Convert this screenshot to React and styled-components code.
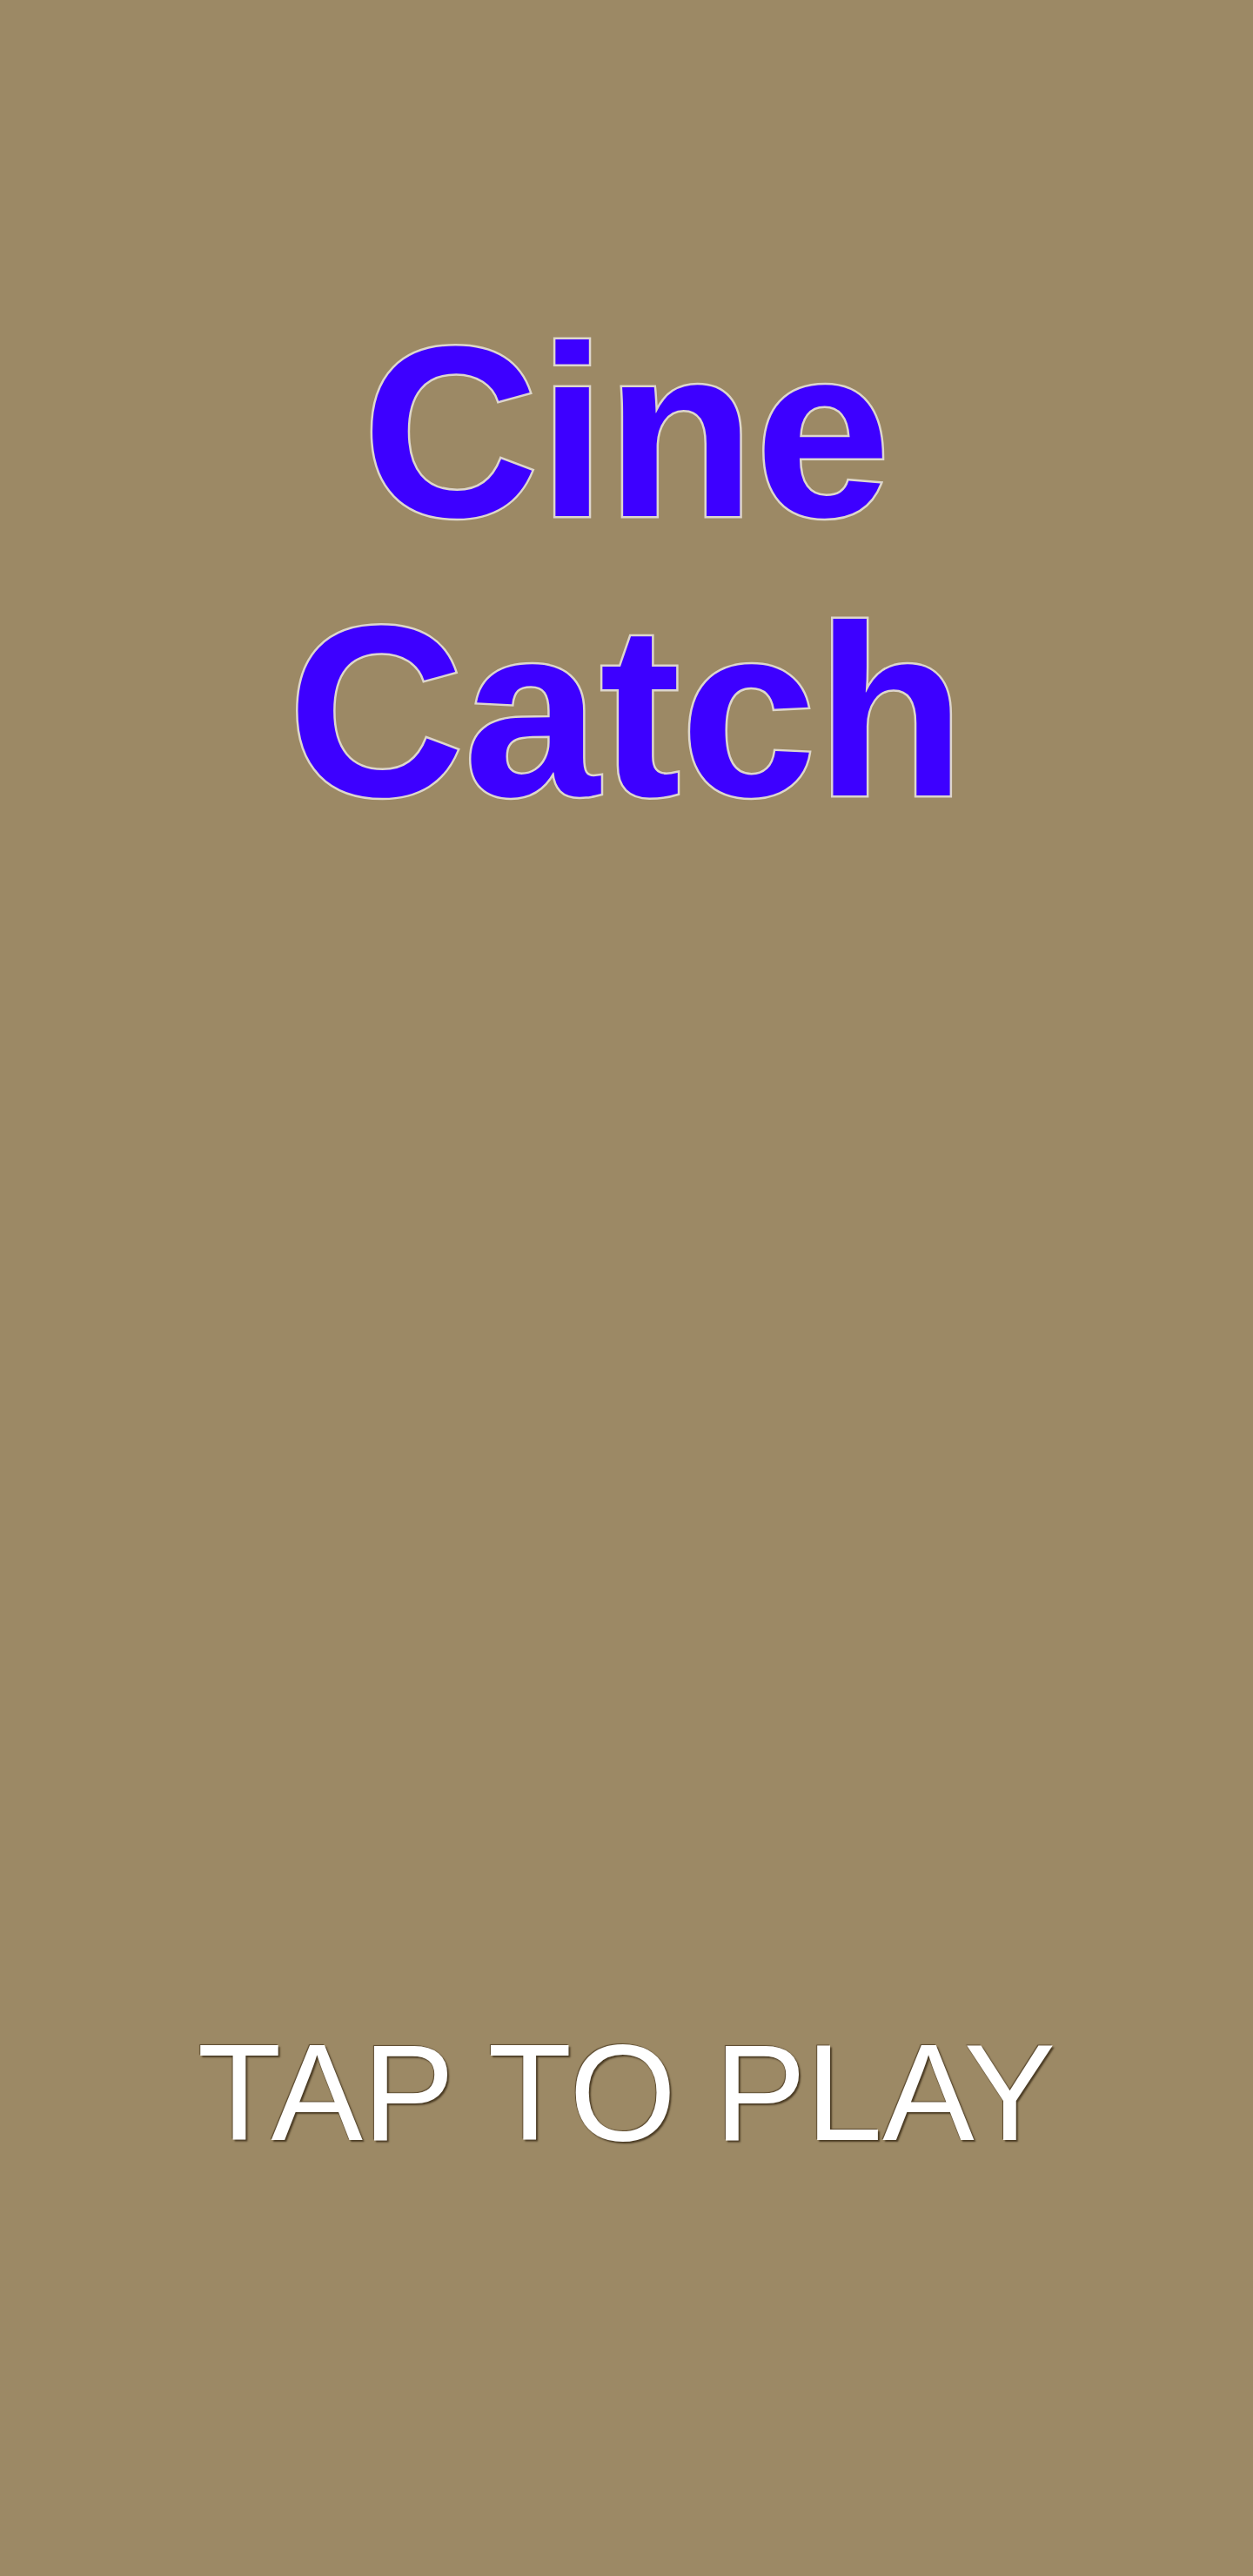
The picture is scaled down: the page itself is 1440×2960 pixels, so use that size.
import styled, { createGlobalStyle } from "styled-components"

const GlobalStyle = createGlobalStyle`
  html, body {
    margin: 0;
    padding: 0;
    background: #9c8965;
  }
  * {
    box-sizing: border-box;
  }
`

const Screen = styled.div`
  width: 100%;
  min-height: 100vh;
  background: #9c8965;
  display: flex;
  flex-direction: column;
  align-items: center;
  font-family: "Liberation Sans", Arial, sans-serif;
  cursor: pointer;
`

const Title = styled.h1`
  margin: 336px 0 0;
  width: 100%;
  text-align: center;
  font-size: 280px;
  font-weight: 700;
  line-height: normal;
  color: #3d00ff;
  -webkit-text-stroke: 5px #ddd6cc;
  paint-order: stroke fill;
`

const Prompt = styled.div`
  margin-top: auto;
  margin-bottom: 465px;
  font-size: 158px;
  font-weight: 400;
  line-height: normal;
  color: #ffffff;
  text-shadow: 2px 2px 2px #4a3b24, -1px -1px 1px #5c4b30;
  white-space: nowrap;
`

const App = () => {
  return (
    <>
      <GlobalStyle />
      <Screen>
        <Title>
          Cine
          <br />
          Catch
        </Title>
        <Prompt>TAP TO PLAY</Prompt>
      </Screen>
    </>
  )
}

export default App
